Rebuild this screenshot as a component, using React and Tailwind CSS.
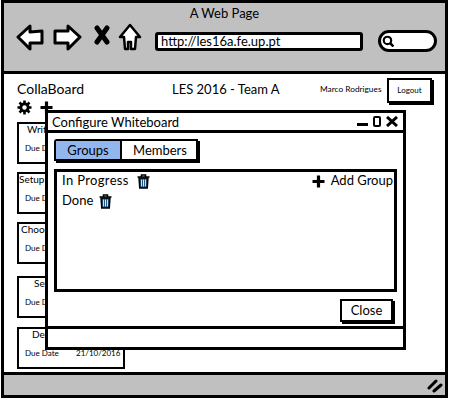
import React from "react";

const Back = () => (
  <svg width="28" height="28" viewBox="0 0 28 28" fill="#fff" stroke="#000" strokeWidth="3" strokeLinejoin="round">
    <path d="M2 14 L14 3 L14 9 L26 8 L26 20 L14 20 L14 26 Z" />
  </svg>
);

const Forward = () => (
  <svg width="29" height="28" viewBox="0 0 29 28" fill="#fff" stroke="#000" strokeWidth="3" strokeLinejoin="round">
    <path d="M27 14 L15 3 L15 8 L2 8 L2 20 L15 20 L15 26 Z" />
  </svg>
);

const Stop = () => (
  <svg width="16" height="20" viewBox="0 0 16 20" stroke="#000" strokeWidth="5" strokeLinecap="round">
    <path d="M3 3 L13 17 M13 3 L3 17" />
  </svg>
);

const Home = () => (
  <svg width="24" height="28" viewBox="0 0 24 28" fill="#fff" stroke="#000" strokeWidth="2.5" strokeLinejoin="round">
    <path d="M12 2 L22 14 L18 14 L17 26 L13 26 L13 19 L10 19 L10 26 L7 26 L6 14 L2 14 Z" />
  </svg>
);

const Gear = () => (
  <svg width="15" height="15" viewBox="0 0 15 15">
    <circle cx="7.5" cy="7.5" r="3.6" fill="none" stroke="#000" strokeWidth="3" />
    <path d="M7.5 0.5 V14.5 M0.5 7.5 H14.5 M2.5 2.5 L12.5 12.5 M12.5 2.5 L2.5 12.5" stroke="#000" strokeWidth="2.6" />
    <circle cx="7.5" cy="7.5" r="2.2" fill="#fff" />
  </svg>
);

const Plus = ({ size = 13 }) => (
  <svg width={size} height={size} viewBox="0 0 13 13" stroke="#000" strokeWidth="3.2">
    <path d="M6.5 0.5 V12.5 M0.5 6.5 H12.5" />
  </svg>
);

const Trash = () => (
  <svg width="13" height="15" viewBox="0 0 13 15" className="shrink-0">
    <path d="M0.5 3 H12.5 M4.5 2.5 V1 H8.5 V2.5" fill="none" stroke="#000" strokeWidth="1.6" />
    <path d="M2 4 H11 L10.3 14 H2.7 Z" fill="#15466e" stroke="#000" strokeWidth="1.4" />
    <path d="M4.6 5.5 V12.5 M6.5 5.5 V12.5 M8.4 5.5 V12.5" stroke="#fff" strokeWidth="0.9" />
  </svg>
);

const Card = ({ title, indent, top }) => (
  <div className={`w-[108px] h-[42px] border-2 border-black bg-white shrink-0 ${top}`}>
    <p className={`text-[10px] leading-[10px] ${indent}`}>{title}</p>
    <div className="flex text-[8px] leading-[10px] mt-[9px] ml-[6px]">
      <span className="w-[51px]">Due Date</span>
      <span>21/10/2016</span>
    </div>
  </div>
);

const App = () => {
  return (
    <div className="relative w-[450px] h-[400px] bg-white text-black font-['Lato',sans-serif]">
      <div className="w-[447px] h-[398px] ml-[1px] border-[3px] border-black flex flex-col overflow-hidden">
        {/* browser chrome */}
        <div className="h-[71px] shrink-0 bg-[#c0c0c0] border-b-[3px] border-black">
          <p className="text-center text-[13px] leading-4 pt-[2px]">A Web Page</p>
          <div className="flex items-start mt-[2px] pl-[12px]">
            <Back />
            <div className="ml-[9px]"><Forward /></div>
            <div className="ml-[12px] mt-[2px]"><Stop /></div>
            <div className="ml-[8px]"><Home /></div>
            <div className="ml-[13px] mt-[9px] w-[208px] h-[19px] border-[3px] border-black rounded-[3px] bg-white text-[13px] leading-[13px] pl-[3px]">
              http://les16a.fe.up.pt
            </div>
            <div className="ml-[15px] mt-[7px] w-[59px] h-[22px] border-[3px] border-black rounded-full bg-white flex items-center pl-[1px]">
              <svg width="12" height="12" viewBox="0 0 11 11" fill="none" stroke="#000">
                <circle cx="5" cy="5" r="3.4" strokeWidth="2" />
                <path d="M7.5 7.5 L10.5 10.5" strokeWidth="2.4" />
              </svg>
            </div>
          </div>
        </div>

        {/* page */}
        <div className="flex-1 min-h-0 pl-[13px]">
          <div className="flex items-start h-[28px]">
            <p className="w-[155px] text-[14px] leading-[18px] mt-[6px]">CollaBoard</p>
            <p className="w-[148px] text-[13px] leading-[18px] mt-[6px]">LES 2016 - Team A</p>
            <p className="w-[67px] text-[8.3px] leading-[10px] mt-[10px]">Marco Rodrigues</p>
            <div className="w-[45px] h-[25px] mt-[4px] border-2 border-black bg-white shadow-[2px_2px_0_#000] text-[8px] leading-[21px] text-center">
              Logout
            </div>
          </div>
          <div className="flex items-center h-[17px] gap-[8px] mt-[-3px]">
            <Gear />
            <Plus />
          </div>
          <div className="flex flex-col">
            <Card title="Write" indent="pl-[8px]" top="mt-[6px]" />
            <Card title="Setup" indent="pl-0" top="mt-[8px]" />
            <Card title="Choose" indent="pl-[2px]" top="mt-[8px]" />
            <Card title="Set" indent="pl-[15px]" top="mt-[12px]" />
            <Card title="Des" indent="pl-[13px]" top="mt-[9px]" />
          </div>
        </div>

        {/* browser footer */}
        <div className="h-[23px] shrink-0 bg-[#c0c0c0] border-t-[3px] border-black flex items-end justify-end pr-[2px] pb-[2px]">
          <svg width="16" height="14" viewBox="0 0 16 14" stroke="#000" strokeWidth="3" strokeLinecap="round">
            <path d="M2 9 L9 2 M7 12 L14 6" />
          </svg>
        </div>
      </div>

      {/* configure dialog */}
      <div className="absolute left-[45px] top-[110px] w-[361px] h-[240px] border-[3px] border-black bg-white flex flex-col">
        <div className="h-[20px] shrink-0 border-b-[3px] border-black flex items-center justify-between pl-[4px] pr-[5px]">
          <p className="text-[13px] leading-4">Configure Whiteboard</p>
          <div className="flex items-center">
            <span className="w-[11px] h-[3px] bg-black mt-[6px]" />
            <span className="ml-[5px] w-[8px] h-[11px] border-2 border-black rounded-[2px]" />
            <svg width="12" height="11" viewBox="0 0 12 11" stroke="#000" strokeWidth="3" className="ml-[5px]">
              <path d="M1 1 L11 10 M11 1 L1 10" />
            </svg>
          </div>
        </div>
        <div className="flex-1 min-h-0 pl-[6px] pr-[6px]">
          <div className="flex w-[144px] h-[22px] mt-[6px] border-2 border-black rounded-tl-[3px] shadow-[2px_2px_0_#000] text-[13px] leading-[18px]">
            <div className="w-[66px] bg-[#92b7ee] border-r-2 border-black text-center">Groups</div>
            <div className="flex-1 text-center pl-[2px]">Members</div>
          </div>
          <div className="w-[343px] h-[123px] mt-[8px] border-[3px] border-black px-[5px] text-[13px]">
            <div className="flex items-center h-[18px]">
              <span className="tracking-[0.35px]">In Progress</span>
              <span className="ml-[8px]"><Trash /></span>
              <span className="ml-auto"><Plus /></span>
              <span className="ml-[6px] -mr-[4px]">Add Group</span>
            </div>
            <div className="flex items-center h-[18px] mt-[2px]">
              <span>Done</span>
              <span className="ml-[6px]"><Trash /></span>
            </div>
          </div>
          <div className="flex justify-end mt-[7px] pr-[4px]">
            <div className="w-[53px] h-[23px] border-2 border-black bg-white shadow-[2px_2px_0_#000] text-[13px] leading-[19px] text-center">
              Close
            </div>
          </div>
        </div>
        <div className="h-[21px] shrink-0 border-t-[3px] border-black" />
      </div>
    </div>
  );
};

export default App;
